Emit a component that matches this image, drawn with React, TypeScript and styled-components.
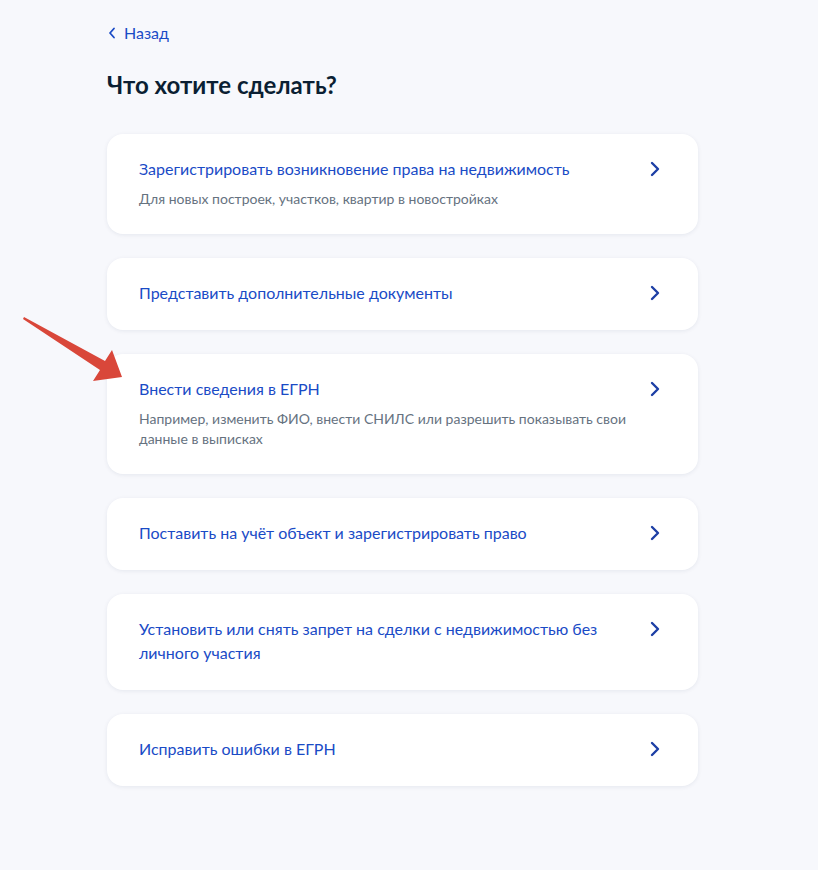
import styled, { createGlobalStyle } from "styled-components";

const GlobalStyle = createGlobalStyle`
    html, body {
        margin: 0;
        padding: 0;
        background: #f7f8fc;
    }
    body {
        font-family: Lato, "Noto Sans", sans-serif;
        color: #0b1f33;
    }
`;

const options = [
    {
        title: "Зарегистрировать возникновение права на недвижимость",
        hint: "Для новых построек, участков, квартир в новостройках",
    },
    { title: "Представить дополнительные документы" },
    {
        title: "Внести сведения в ЕГРН",
        hint: "Например, изменить ФИО, внести СНИЛС или разрешить показывать свои данные в выписках",
    },
    { title: "Поставить на учёт объект и зарегистрировать право" },
    { title: "Установить или снять запрет на сделки с недвижимостью без личного участия" },
    { title: "Исправить ошибки в ЕГРН" },
];

const App = () => {
    return (
        <>
            <GlobalStyle />
            <Page>
                <Pointer viewBox="0 0 140 400" aria-hidden>
                    <polygon points="24,317 105,361 112,350 122,377 93,381 100,370 23,319" fill="#d9473a" />
                </Pointer>
                <Content>
                    <BackLink href="#">
                        <svg width="8" height="12" viewBox="0 0 8 12">
                            <path d="M6 1.5 L2 6 L6 10.5" fill="none" stroke="currentColor" strokeWidth="1.8" strokeLinecap="round" strokeLinejoin="round" />
                        </svg>
                        Назад
                    </BackLink>
                    <Heading>Что хотите сделать?</Heading>
                    <List>
                        {options.map(o => (
                            <Card key={o.title} href="#">
                                <CardText>
                                    <CardTitle>{o.title}</CardTitle>
                                    {o.hint && <CardHint>{o.hint}</CardHint>}
                                </CardText>
                                <Chevron width="10" height="16" viewBox="0 0 10 16">
                                    <path d="M2 2 L8 8 L2 14" fill="none" stroke="currentColor" strokeWidth="2.4" strokeLinecap="round" strokeLinejoin="round" />
                                </Chevron>
                            </Card>
                        ))}
                    </List>
                </Content>
            </Page>
        </>
    );
};

export default App;

const Page = styled.div`
    position: relative;
    min-height: 870px;
    padding: 21px 0 40px;
    box-sizing: border-box;
`;

const Pointer = styled.svg`
    position: absolute;
    left: 0;
    top: 0;
    width: 140px;
    height: 400px;
    pointer-events: none;
    z-index: 2;
`;

const Content = styled.div`
    width: 591px;
    margin-left: 107px;
`;

const BackLink = styled.a`
    display: inline-flex;
    align-items: center;
    gap: 8px;
    padding-left: 1px;
    font-size: 16px;
    line-height: 24px;
    color: #1a4bc6;
    text-decoration: none;
`;

const Heading = styled.h1`
    margin: 24px 0 33px;
    font-size: 24px;
    line-height: 32px;
    font-weight: 700;
    color: #0b1f33;
`;

const List = styled.div`
    display: flex;
    flex-direction: column;
    gap: 24px;
`;

const Card = styled.a`
    display: flex;
    align-items: flex-start;
    justify-content: space-between;
    gap: 14px;
    padding: 23px 38px 25px 32px;
    background: #ffffff;
    border-radius: 16px;
    box-shadow: 0 1px 4px rgba(14, 38, 77, 0.08);
    text-decoration: none;
`;

const CardText = styled.div`
    flex: 1;
    display: flex;
    flex-direction: column;
    gap: 8px;
`;

const CardTitle = styled.span`
    font-size: 16px;
    line-height: 24px;
    color: #1a4bc6;
`;

const CardHint = styled.span`
    font-size: 14px;
    line-height: 20px;
    color: #66727f;
`;

const Chevron = styled.svg`
    flex-shrink: 0;
    margin-top: 4px;
    color: #1d3fa5;
`;
